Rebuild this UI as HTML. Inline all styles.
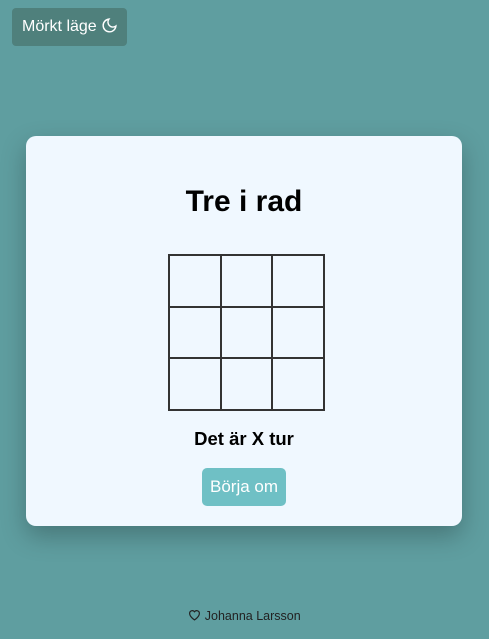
<!DOCTYPE html>
<html><head><style>
*{box-sizing:border-box;margin:0;padding:0}
body{width:489px;height:639px;background:#5f9ea0;font-family:"Liberation Sans",sans-serif;position:relative;overflow:hidden}
.mode{position:absolute;left:12px;top:8px;width:115px;height:38px;background:#4f807c;border-radius:4px;color:#fff;font-size:16px;line-height:38px;padding-left:10px}
.mode svg{vertical-align:-3px}
.card{position:absolute;left:26px;top:136px;width:436px;height:390px;background:#f0f8ff;border-radius:10px;box-shadow:0 10px 25px rgba(0,0,0,.25)}
h1{position:absolute;top:48px;width:100%;text-align:center;font-size:30px;font-weight:bold;color:#000;line-height:36px}
.grid{position:absolute;left:142px;top:118px;width:157px;height:157px;border:1px solid #333;display:grid;grid-template-columns:repeat(3,1fr);grid-template-rows:repeat(3,1fr)}
.grid div{border:1px solid #333}
.st{position:absolute;top:292px;width:100%;text-align:center;font-size:18.5px;font-weight:bold}
.btn{position:absolute;left:176px;top:332px;width:84px;height:38px;background:#6fc0c5;border-radius:5px;color:#fff;font-size:17px;line-height:38px;text-align:center}
.ft{position:absolute;top:609px;width:100%;text-align:center;font-size:12.5px;color:#222}
</style></head><body>
<div class="mode">Mörkt läge <svg width="17" height="17" viewBox="0 0 24 24" fill="none" stroke="#fff" stroke-width="2"><path d="M21 12.8A9 9 0 1 1 11.2 3a7 7 0 0 0 9.8 9.8z"/></svg></div>
<div class="card">
<h1>Tre i rad</h1>
<div class="grid"><div></div><div></div><div></div><div></div><div></div><div></div><div></div><div></div><div></div></div>
<div class="st">Det är X tur</div>
<div class="btn">Börja om</div>
</div>
<div class="ft"><svg width="13" height="12" viewBox="0 0 24 22" fill="none" stroke="#222" stroke-width="2.2" style="vertical-align:-1px"><path d="M12 20s-9-5.6-9-12a5 5 0 0 1 9-3 5 5 0 0 1 9 3c0 6.4-9 12-9 12z"/></svg> Johanna Larsson</div>
</body></html>
